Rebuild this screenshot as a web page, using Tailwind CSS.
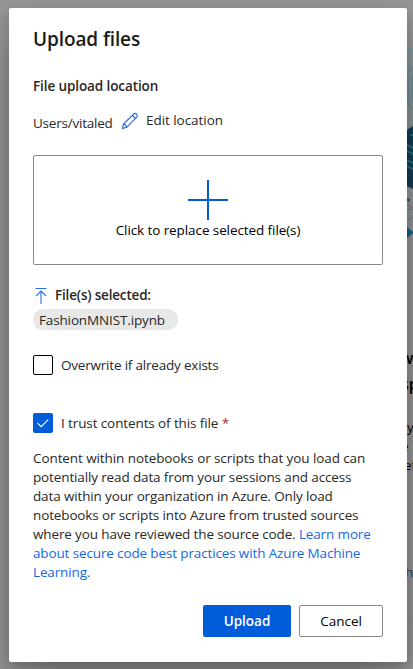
<!DOCTYPE html>
<html lang="en">
<head>
<meta charset="utf-8">
<title>Upload files</title>
<script src="https://cdn.jsdelivr.net/npm/@tailwindcss/browser@4"></script>
</head>
<body class="relative w-[413px] h-[669px] overflow-hidden bg-[#999999] pt-2 pl-[9px] font-['Open_Sans',sans-serif] text-[13.5px] leading-[19px] text-[#292827]">
<!-- page behind the dialog -->
<div class="absolute left-[407px] top-0 w-[6px] h-[669px] overflow-hidden text-black" aria-hidden="true">
  <svg class="absolute left-0 top-0" width="6" height="240" viewBox="0 0 6 240" fill="none">
    <path d="M0 47h6v4H0z" fill="#7ba1a5"/>
    <path d="M0 51h6v75l-6 4z" fill="#8b999b"/>
    <path d="M0 71h3v-3h3M1 77v26l2 4 3 3M5 75v26" stroke="#6496a5" stroke-width="1.2"/>
    <path d="M0 130l6-4v63l-6-3z" fill="#173e57"/>
    <path d="M3 135h3M0 145l6 3M0 151l6 3M0 160l6 3M0 166l6 3" stroke="#287e96" stroke-width="1.5"/>
    <path d="M0 198l3 1-1 3-2-1zM0 227l6 5v1l-6 5z" fill="#126592"/>
    <path d="M0 211l6-4M0 204l6 6M0 221l6-4" stroke="#4a8da2"/>
  </svg>
  <span class="absolute -left-px top-[349px] text-[16px] font-semibold">w</span>
  <span class="absolute -left-[6px] top-[375px] text-[16px] font-semibold">sp</span>
  <span class="absolute left-0 top-[418px]">y</span>
  <span class="absolute -left-[6px] top-[437px]">e t</span>
  <span class="absolute -left-[3px] top-[456px]">et</span>
  <span class="absolute -left-[2px] top-[563px] text-[#173f94]">h</span>
</div>

<main class="relative flex flex-col w-[398px] h-[654px] rounded-[2px] bg-white pl-6 pr-6 pt-[17px] shadow-[0_25px_58px_rgba(0,0,0,0.25),0_5px_14px_rgba(0,0,0,0.22)]">
  <h1 class="h-7 leading-7 text-[19px] font-semibold tracking-[-0.1px] text-[#1b1a19]">Upload files</h1>
  <h2 class="mt-[24px] h-[19px] text-[13.5px] font-semibold tracking-[-0.1px]">File upload location</h2>
  <div class="mt-[13px] flex h-[28px]">
    <span class="pt-[5px] w-[88px] tracking-[-0.22px]">Users/vitaled</span>
    <svg class="mt-[3px]" width="18" height="18" viewBox="0 0 18 18" fill="none" stroke="#1a66dc" stroke-width="1.1"><path d="M1.5 16.5l1-4.5L12.8 1.8q1.4-1 2.8.3t.3 2.9L5.8 15.3zM11.2 3.4l3.3 3.3M2.5 12q2.5.4 3.3 3.3"/></svg>
    <span class="pt-[2px] ml-[7px] tracking-[-0.05px]">Edit location</span>
  </div>
  <div class="mt-[18px] flex h-[110px] w-[350px] flex-col items-center rounded-[2px] border border-[#8a8886] pt-[24px] text-black">
    <svg width="40" height="40" viewBox="0 0 40 40" fill="#015cda"><path d="M19 0h2v19h19v2H21v19h-2V21H0v-2h19z"/></svg>
    <span class="mt-[1px] h-[19px] tracking-[-0.09px]">Click to replace selected file(s)</span>
  </div>
  <div class="mt-[19px] flex h-[22px] items-center">
    <svg class="relative top-px" width="16" height="18" viewBox="0 0 16 18" fill="none" stroke="#2672e0" stroke-width="1.1"><path d="M2.5 1.5h11M8 17V4.5M3 9l5-5 5 5"/></svg>
    <span class="ml-[6px] font-semibold tracking-[-0.18px]">File(s) selected:</span>
  </div>
  <div class="mt-[3px] h-[21px] w-[145px] rounded-[10px] bg-[#e8e8e8] pl-[6px] leading-[22px] tracking-[-0.14px]">FashionMNIST.ipynb</div>
  <label class="mt-[25px] flex h-5 items-center gap-2">
    <span class="h-5 w-5 rounded-[2px] border border-black"></span><span class="tracking-[-0.2px]">Overwrite if already exists</span>
  </label>
  <label class="mt-[38px] flex h-5 items-center gap-2">
    <span class="flex h-5 w-5 items-center justify-center rounded-[2px] bg-[#015cda]"><svg width="14" height="14" viewBox="0 0 14 14" fill="none" stroke="#fff" stroke-width="1.1"><path d="M1.5 7.2l3.7 3.5 7-7.1"/></svg></span>
    <span class="tracking-[-0.11px]">I trust contents of this file <span class="text-[#a4262c]">*</span></span>
  </label>
  <p class="mt-[16px] h-[133px] whitespace-nowrap tracking-[-0.135px]"><span class="tracking-[-0.09px]">Content within notebooks or scripts that you load can</span><br>potentially read data from your sessions and access<br>data within your organization in Azure. Only load<br>notebooks or scripts into Azure from trusted sources<br>where you have reviewed the source code. <a class="text-[#1569df]">Learn more<br>about secure code best practices with Azure Machine<br>Learning.</a></p>
  <div class="mt-[23px] flex justify-end gap-2">
    <button class="h-8 w-[88px] rounded-[2px] bg-[#015cda] font-semibold text-white">Upload</button>
    <button class="h-8 w-[84px] rounded-[2px] border border-[#8a8886] text-black">Cancel</button>
  </div>
</main>
</body>
</html>
